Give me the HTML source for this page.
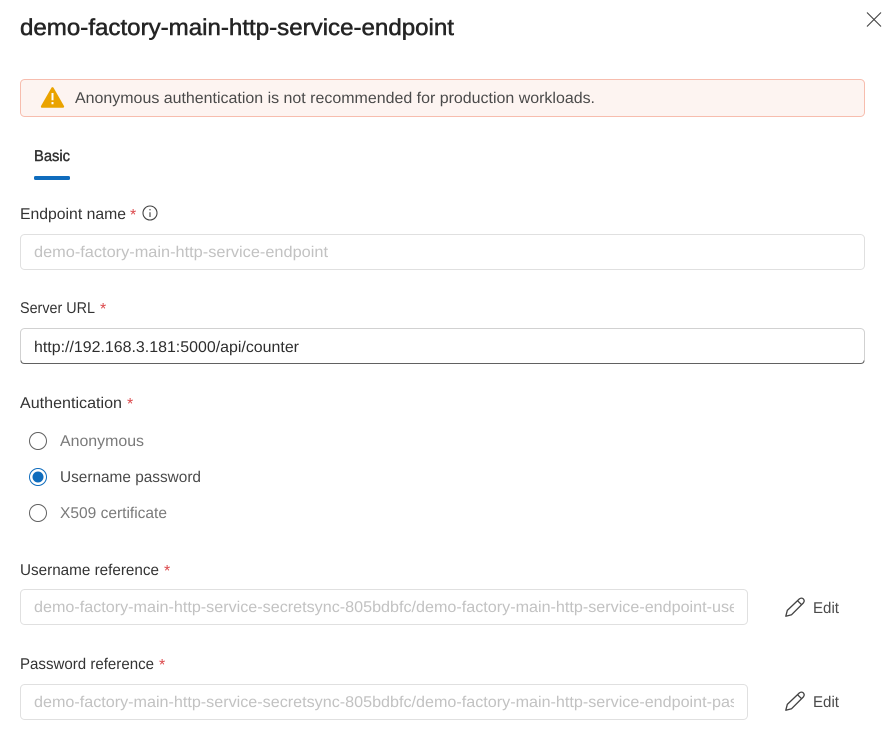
<!DOCTYPE html>
<html><head><meta charset="utf-8"><title>demo-factory-main-http-service-endpoint</title>
<style>
html,body{margin:0;padding:0;background:#fff;width:883px;height:747px;overflow:hidden}
svg{display:block}
text{font-family:"Liberation Sans",Arial,sans-serif;font-size:15.6px;fill:#4a4a4a;text-rendering:geometricPrecision}
.l{fill:#333}
.d{fill:#c2c2c2}
.m{fill:#7a7a7a}
.r{fill:#dc4a4d;font-size:16px}
.b{fill:#fff;stroke:#e0e0e0}
</style></head><body>
<svg width="883" height="747" viewBox="0 0 883 747" xmlns="http://www.w3.org/2000/svg">
<defs>
<clipPath id="c1"><rect x="34" y="590" width="700" height="35"/></clipPath>
<clipPath id="c2"><rect x="34" y="684" width="700" height="35"/></clipPath>
</defs>
<text x="20" y="35" textLength="434" lengthAdjust="spacingAndGlyphs" style="font-size:23px;fill:#242424;stroke:#242424;stroke-width:.5">demo-factory-main-http-service-endpoint</text>
<path d="M867 12.5L881 26.5M881 12.5L867 26.5" stroke="#424242" stroke-width="1.1" fill="none"/>

<rect x="20.5" y="79.5" width="844" height="37" rx="4" fill="#fdf4f1" stroke="#f7bdae"/>
<path d="M52.5 88.5L62.8 106.5H42.2Z" fill="#eaa300" stroke="#eaa300" stroke-width="2.6" stroke-linejoin="round"/>
<path d="M52.5 93V100.2M52.5 102V104.2" stroke="#fff" stroke-width="2" fill="none"/>
<text x="75" y="103" textLength="520" lengthAdjust="spacingAndGlyphs">Anonymous authentication is not recommended for production workloads.</text>

<text x="34" y="161" textLength="36" lengthAdjust="spacingAndGlyphs" style="fill:#303030;stroke:#303030;stroke-width:.4">Basic</text>
<rect x="34" y="176" width="36" height="4" rx="1.5" fill="#0f6cbd"/>

<text class="l" x="20" y="219" textLength="106" lengthAdjust="spacingAndGlyphs">Endpoint name</text>
<text class="r" x="130" y="220">*</text>
<circle cx="150" cy="213" r="7" fill="none" stroke="#424242" stroke-width="1.1"/>
<path d="M150 212.2V217M150 209V210.4" stroke="#424242" stroke-width="1.1" fill="none"/>
<rect class="b" x="20.5" y="234.5" width="844" height="35" rx="4"/>
<text class="d" x="34" y="257" textLength="294" lengthAdjust="spacingAndGlyphs">demo-factory-main-http-service-endpoint</text>

<text class="l" x="20" y="313" textLength="75" lengthAdjust="spacingAndGlyphs">Server URL</text>
<text class="r" x="100" y="314">*</text>
<rect x="20.5" y="328.5" width="844" height="35" rx="4" fill="#fff" stroke="#d1d1d1"/>
<path d="M21 360.5Q21 363.5 24.5 363.5H860.5Q864 363.5 864 360.5" fill="none" stroke="#616161"/>
<text x="34" y="352" textLength="265" lengthAdjust="spacingAndGlyphs" style="fill:#2e2e2e">http://192.168.3.181:5000/api/counter</text>

<text class="l" x="20" y="408" textLength="102" lengthAdjust="spacingAndGlyphs">Authentication</text>
<text class="r" x="127" y="409">*</text>

<circle cx="38" cy="441" r="8.5" fill="#fff" stroke="#616161"/>
<text class="m" x="60" y="446" textLength="84" lengthAdjust="spacingAndGlyphs">Anonymous</text>
<circle cx="38" cy="477" r="8.5" fill="#fff" stroke="#0f6cbd"/>
<circle cx="38" cy="477" r="5.5" fill="#0f6cbd"/>
<text x="60" y="482" textLength="141" lengthAdjust="spacingAndGlyphs">Username password</text>
<circle cx="38" cy="513" r="8.5" fill="#fff" stroke="#616161"/>
<text class="m" x="60" y="518" textLength="107" lengthAdjust="spacingAndGlyphs">X509 certificate</text>

<text class="l" x="20" y="575" textLength="139" lengthAdjust="spacingAndGlyphs">Username reference</text>
<text class="r" x="164" y="576">*</text>
<rect class="b" x="20.5" y="589.5" width="727" height="35" rx="4"/>
<g clip-path="url(#c1)"><text class="d" x="34" y="612" textLength="704" lengthAdjust="spacingAndGlyphs">demo-factory-main-http-service-secretsync-805bdbfc/demo-factory-main-http-service-endpoint-use</text></g>
<path d="M785.8 616.2L787.3 610.4L799.4 598.9Q801.6 597.3 803.4 599Q805 600.9 803.3 603L791.6 614.7ZM797.5 600.7L801.6 604.7" fill="none" stroke="#424242" stroke-width="1.3" stroke-linejoin="round"/>
<text x="813" y="613" textLength="26" lengthAdjust="spacingAndGlyphs">Edit</text>

<text class="l" x="20" y="669" textLength="134" lengthAdjust="spacingAndGlyphs">Password reference</text>
<text class="r" x="159" y="670">*</text>
<rect class="b" x="20.5" y="684.5" width="727" height="35" rx="4"/>
<g clip-path="url(#c2)"><text class="d" x="34" y="707" textLength="704" lengthAdjust="spacingAndGlyphs">demo-factory-main-http-service-secretsync-805bdbfc/demo-factory-main-http-service-endpoint-pas</text></g>
<path d="M785.8 710.2L787.3 704.4L799.4 692.9Q801.6 691.3 803.4 693Q805 694.9 803.3 697L791.6 708.7ZM797.5 694.7L801.6 698.7" fill="none" stroke="#424242" stroke-width="1.3" stroke-linejoin="round"/>
<text x="813" y="707" textLength="26" lengthAdjust="spacingAndGlyphs">Edit</text>
</svg>
</body></html>
